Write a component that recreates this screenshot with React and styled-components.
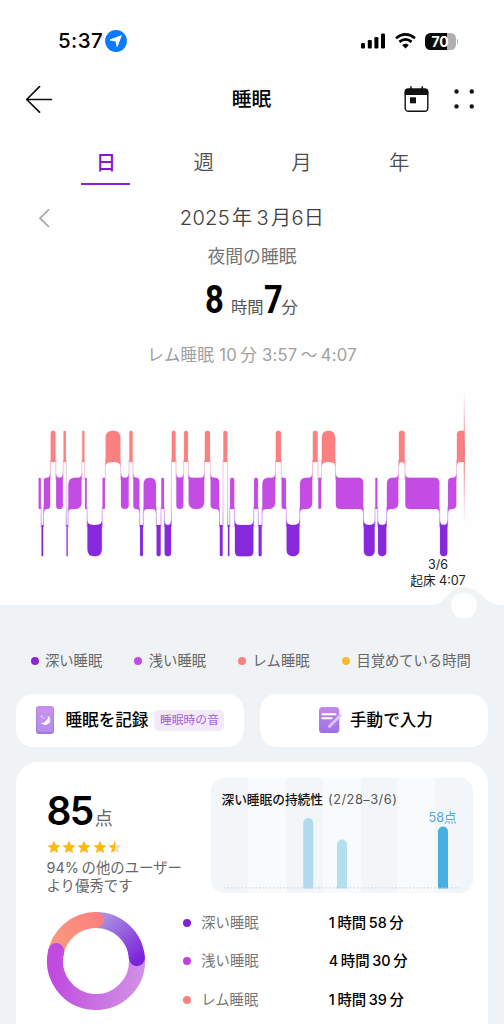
import React from "react";
import styled, { createGlobalStyle } from "styled-components";

const Global = createGlobalStyle`
  * { box-sizing: border-box; }
  body { margin: 0; background: #fefefe; overflow: hidden; }
`;

const font = `Inter, "Noto Sans CJK JP", sans-serif`;

const Screen = styled.div`
  width: 504px;
  height: 1024px;
  overflow: hidden;
  display: flex;
  flex-direction: column;
  background: #fefefe;
  font-family: ${font};
  color: #000;
  white-space: nowrap;
  & > * { flex: none; }
`;

/* Text whose drawn width is set by size and tracking */
const Text = styled.span`
  display: block;
  font-size: ${(p) => p.$size}px;
  line-height: ${(p) => p.$line || 20}px;
  font-weight: ${(p) => p.$weight || 400};
  color: ${(p) => p.$color || "#000"};
  letter-spacing: ${(p) => p.$track || 0}px;
`;

const StatusBar = styled.header`
  height: 82px;
  padding: 0 46px 0 58px;
  display: flex;
  align-items: center;
  justify-content: space-between;
`;
const Cluster = styled.div`
  display: flex;
  align-items: center;
  gap: ${(p) => p.$gap}px;
`;
const Battery = styled.div`
  width: 31px;
  height: 17px;
  border-radius: 5.5px;
  display: flex;
  align-items: center;
  justify-content: center;
  background: linear-gradient(90deg, #0a0a0a 0 70%, #b0b0b0 70%);
  color: #fff;
  font: 700 14px/17px Inter, sans-serif;
  letter-spacing: -0.3px;
`;
const BatteryTip = styled.div`
  width: 1.5px;
  height: 5px;
  border-radius: 0 2px 2px 0;
  background: #b5b5b5;
`;

const NavBar = styled.nav`
  height: 34px;
  padding: 0 28px 0 25px;
  display: grid;
  grid-template-columns: 74px 1fr 72px;
  align-items: center;
  text-align: center;
`;

const Tabs = styled.div`
  height: 69px;
  padding: 0 56px 0 57px;
  display: grid;
  grid-template-columns: repeat(4, 1fr);
  align-items: end;
  justify-items: center;
`;
const Tab = styled.div`
  width: 49px;
  height: 40px;
  text-align: center;
  font-size: 20.5px;
  line-height: 36px;
  color: ${(p) => (p.$active ? "#8319cf" : "#4d4d4d")};
  font-weight: ${(p) => (p.$active ? 500 : 350)};
  border-bottom: 2.5px solid ${(p) => (p.$active ? "#8a22d4" : "transparent")};
`;

const DateRow = styled.div`
  height: 66px;
  padding-left: 37px;
  padding-right: 37px;
  display: grid;
  grid-template-columns: 13px 1fr 13px;
  align-items: center;
  justify-items: center;
`;
const Center = styled.div`
  height: ${(p) => p.$h}px;
  display: flex;
  align-items: center;
  justify-content: center;
`;
const Duration = styled.div`
  height: 62px;
  display: flex;
  align-items: baseline;
  padding-left: 205px;
  padding-top: 15px;
`;
const BigDigit = styled.span`
  display: inline-block;
  width: ${(p) => p.$w}px;
  font: 700 39px/46px Roboto, sans-serif;
  transform: scaleX(0.84);
  transform-origin: 0 50%;
`;

const Chart = styled.svg`
  display: block;
  width: 504px;
  height: 172px;
`;
const WakeNote = styled.div`
  height: 48px;
  padding-left: 372px;
  width: 504px;
  display: flex;
  flex-direction: column;
  align-items: center;
`;

const Panel = styled.main`
  height: 419px;
  position: relative;
  background: #eff3f5;
  padding: 46px 16px 0 15.5px;
`;
const Bump = styled.svg`
  position: absolute;
  right: 0;
  top: -20px;
`;
const Legend = styled.div`
  height: 20px;
  padding-left: 15px;
  display: flex;
`;
const LegendItem = styled.div`
  width: 103.8px;
  flex: none;
  display: flex;
  align-items: center;
  gap: 6.5px;
`;
const Dot = styled.i`
  flex: none;
  width: 8px;
  height: 8px;
  border-radius: 50%;
  background: ${(p) => p.$color};
`;

const Actions = styled.div`
  margin-top: 23px;
  display: grid;
  grid-template-columns: 1fr 1fr;
  gap: 15.5px;
`;
const Action = styled.div`
  height: 52.5px;
  border-radius: 17px;
  background: #fff;
  display: flex;
  align-items: center;
  padding-left: ${(p) => p.$left}px;
`;
const ActionText = styled.span`
  margin-left: ${(p) => p.$gap}px;
  font-size: 16.6px;
  line-height: 24px;
  font-weight: 500;
`;
const Badge = styled.span`
  margin-left: 6px;
  width: 70px;
  height: 21px;
  border-radius: 5px;
  background: #f2eafb;
  display: flex;
  justify-content: center;
`;

const Card = styled.section`
  margin-top: 15.5px;
  height: 300px;
  border-radius: 22px;
  background: #fff;
  padding: 15.5px 15.5px 0 31px;
`;
const Summary = styled.div`
  display: grid;
  grid-template-columns: 164px 262px;
  height: 126px;
`;
const Score = styled.div`
  display: flex;
  align-items: baseline;
  gap: 2px;
  height: 60px;
  padding-top: 10px;
`;
const Stars = styled.div`
  display: flex;
  gap: 1.4px;
  height: 21px;
  padding-top: 2px;
`;
const Trend = styled.div`
  height: 115.5px;
  border-radius: 13px;
  overflow: hidden;
  background: repeating-linear-gradient(90deg, #f2f6f8 0 37.4px, #f9fafc 37.4px 74.8px);
  padding: 13px 0 0 11px;
`;
const TrendTitle = styled.div`
  display: flex;
  gap: 5px;
  height: 17px;
`;
const TrendPlot = styled.svg`
  display: block;
`;

const Breakdown = styled.div`
  display: grid;
  grid-template-columns: 136.5px 1fr;
`;
const Donut = styled.svg`
  margin-top: 7px;
  margin-left: -1px;
`;
const Row = styled.div`
  height: 38.5px;
  display: grid;
  grid-template-columns: 18.3px 127.5px 1fr;
  align-items: center;
`;
const Value = styled.div`
  font-size: 14.4px;
  line-height: 20px;
  font-weight: 500;
  display: flex;
  gap: 2.6px;
`;

const levelColors = ["#fb8080", "#c44be4", "#8728dc"];
const levelTop = [430.7, 477.8, 525];
const BAND = 31.2;

/* Consecutive sleep stages: [level, end x]; levels are 0 REM, 1 light, 2 deep */
const chartStart = 38.3;
const stages = [
  [1, 41.2], [2, 43.5], [1, 50.4], [0, 55.8], [1, 63.2], [0, 66.2], [2, 68], [1, 81.9],
  [0, 84.7], [1, 87.1], [2, 102.2], [1, 105.3], [0, 120.7], [1, 129], [0, 133], [1, 139.7],
  [2, 143.3], [1, 156.3], [2, 161], [1, 164.3], [2, 171.4], [0, 176], [1, 183.7], [0, 188.3],
  [1, 204.5], [0, 210.3], [1, 219.5], [2, 223], [0, 227.6], [2, 229.7], [1, 234.6], [2, 253.7],
  [1, 258.3], [2, 262], [1, 275.5], [0, 281.3], [1, 286.3], [2, 299.7], [1, 312.5], [0, 318],
  [1, 321.5], [0, 335.5], [1, 363.5], [2, 375], [1, 377.7], [2, 386.6], [1, 398.6], [0, 405],
  [1, 439.7], [2, 447.7], [1, 456.6], [0, 464.4],
];

const segments = stages.map(([level, x1], i) => {
  const x0 = i ? stages[i - 1][1] : chartStart;
  return { level, x0, x1, prev: i ? stages[i - 1][0] : null, next: i < stages.length - 1 ? stages[i + 1][0] : null };
});

/* Band outline: rounded away from a neighbour, flared toward it; thin bands stay plain */
function stagePath({ level, x0, x1, prev, next }) {
  const l = x0 + 0.35, r = x1 - 0.35, w = r - l;
  const t = levelTop[level], b = t + BAND;
  const rad = Math.min(w / 2, w < 16 ? 7 : 4.5);
  const plain = w < 5.6;
  const flare = plain ? 0 : 4;
  const fw = plain ? 0 : Math.min(w / 2, level === 1 ? 3.5 : rad);
  const up = (n) => n !== null && n < level;
  const down = (n) => n !== null && n > level;
  const flat = next === null;
  let d = up(prev)
    ? `M${l} ${t - flare}Q${l} ${t} ${l + fw} ${t}`
    : `M${l} ${t + rad}Q${l} ${t} ${l + rad} ${t}`;
  if (flat) d += `H${r}`;
  else d += up(next) ? `H${r - fw}Q${r} ${t} ${r} ${t - flare}` : `H${r - rad}Q${r} ${t} ${r} ${t + rad}`;
  if (flat) d += `V${b}`;
  else d += down(next) ? `V${b + flare}Q${r} ${b} ${r - fw} ${b}` : `V${b - rad}Q${r} ${b} ${r - rad} ${b}`;
  d += down(prev) ? `H${l + fw}Q${l} ${b} ${l} ${b + flare}Z` : `H${l + rad}Q${l} ${b} ${l} ${b - rad}Z`;
  return d;
}

function Hypnogram() {
  return (
    <Chart viewBox="0 385 504 172">
      <defs>
        <linearGradient id="joint" gradientUnits="userSpaceOnUse" x1="0" y1="455" x2="0" y2="535">
          <stop offset="0" stopColor="#fb9a9a" />
          <stop offset=".35" stopColor="#e0a0e8" />
          <stop offset=".65" stopColor="#d78bec" />
          <stop offset="1" stopColor="#8728dc" />
        </linearGradient>
        <linearGradient id="cursor" x1="0" y1="0" x2="0" y2="1">
          <stop offset="0" stopColor="#f17a8a" stopOpacity="0" />
          <stop offset=".45" stopColor="#ec7084" />
          <stop offset="1" stopColor="#f17a8a" stopOpacity="0" />
        </linearGradient>
      </defs>
      {segments.slice(1).map((s) => {
        const top = Math.min(s.level, s.prev), bottom = Math.max(s.level, s.prev);
        const y = levelTop[top] + BAND - 2;
        return <rect key={s.x0} x={s.x0 - 0.5} y={y} width="1" height={levelTop[bottom] + 2 - y} fill="url(#joint)" opacity=".6" />;
      })}
      {segments.map((s) => (
        <path key={s.x0} d={stagePath(s)} fill={levelColors[s.level]} stroke={levelColors[s.level]} strokeOpacity=".25" strokeWidth=".7" />
      ))}
      <rect x="463.7" y="391" width="1.2" height="134" fill="url(#cursor)" />
    </Chart>
  );
}

const polar = (deg) => {
  const a = ((deg - 90) * Math.PI) / 180;
  return [50 + 41 * Math.cos(a), 50 + 41 * Math.sin(a)];
};
const arc = (a, b) => {
  const [x0, y0] = polar(a), [x1, y1] = polar(b);
  return `M${x0} ${y0}A41 41 0 ${b - a > 180 ? 1 : 0} 1 ${x1} ${y1}`;
};

function StageDonut() {
  const [dx, dy] = polar(86);
  const [lx, ly] = polar(284);
  const [rx, ry] = polar(0);
  return (
    <Donut width="100" height="100" viewBox="0 0 100 100" fill="none" strokeWidth="16">
      <defs>
        <linearGradient id="dDeep" gradientUnits="userSpaceOnUse" x1="56" y1="8" x2="92" y2="50">
          <stop stopColor="#aa8fe2" /><stop offset="1" stopColor="#7c22da" />
        </linearGradient>
        <linearGradient id="dLight" gradientUnits="userSpaceOnUse" x1="95" y1="60" x2="10" y2="45">
          <stop stopColor="#d08fe6" /><stop offset="1" stopColor="#c04ade" />
        </linearGradient>
        <linearGradient id="dRem" gradientUnits="userSpaceOnUse" x1="12" y1="40" x2="55" y2="8">
          <stop stopColor="#f89a7c" /><stop offset="1" stopColor="#fc8080" />
        </linearGradient>
      </defs>
      <path d={arc(0, 86)} stroke="url(#dDeep)" />
      <path d={arc(278, 360)} stroke="url(#dRem)" />
      <circle cx={rx} cy={ry} r="8" fill="url(#dRem)" />
      <path d={arc(85, 284)} stroke="url(#dLight)" />
      <circle cx={lx} cy={ly} r="8" fill="url(#dLight)" />
      <circle cx={dx} cy={dy} r="8" fill="url(#dDeep)" />
    </Donut>
  );
}

const starPath = "M7 .6 8.95 4.9 13.6 5.4 10.1 8.5 11.1 13.1 7 10.7 2.9 13.1 3.9 8.5 .4 5.4 5.05 4.9Z";
function Star({ half }) {
  return (
    <svg width="14" height="14" viewBox="0 0 14 14">
      <defs>
        <linearGradient id="halfStar"><stop offset=".5" stopColor="#fcb813" /><stop offset=".5" stopColor="#dedede" /></linearGradient>
      </defs>
      <path d={starPath} fill={half ? "url(#halfStar)" : "#fcb813"} />
    </svg>
  );
}

const legend = [
  ["深い睡眠", "#8728dc"],
  ["浅い睡眠", "#c44be4"],
  ["レム睡眠", "#fb8080"],
  ["目覚めている時間", "#fcb928"],
];
const breakdown = [
  ["深い睡眠", "1時間58分", "#7d24d8"],
  ["浅い睡眠", "4時間30分", "#c040e0"],
  ["レム睡眠", "1時間39分", "#fb8080"],
];

export default function App() {
  return (
    <Screen>
      <Global />
      <StatusBar>
        <Cluster $gap={2}>
          <Text $size={20.5} $weight={500} $track={0.4}>5:37</Text>
          <svg width="22" height="22" viewBox="0 0 22 22">
            <circle cx="11" cy="11" r="10.9" fill="#0a7bfe" />
            <path d="M16.3 5.7 12.1 16.5 11.1 11.2 5 9.9Z" fill="#fff" stroke="#fff" strokeWidth=".9" strokeLinejoin="round" />
          </svg>
        </Cluster>
        <Cluster $gap={9}>
          <svg width="25" height="16" viewBox="0 0 25 16" fill="#000">
            <rect x="0" y="10" width="4" height="5.5" rx="1.2" />
            <rect x="6.8" y="7" width="4" height="8.5" rx="1.2" />
            <rect x="13.4" y="4" width="4" height="11.5" rx="1.2" />
            <rect x="20" y="0.6" width="4" height="14.9" rx="1.2" />
          </svg>
          <svg width="21" height="16" viewBox="0 0 21 16" fill="none" stroke="#000" strokeWidth="2.7">
            <path d="M1 5.2Q10.5-2.4 20 5.2" />
            <path d="M4.4 8.9Q10.5 4 16.6 8.9" />
            <path d="M10.5 15.5 7.2 12.2Q10.5 9.4 13.8 12.2Z" fill="#000" stroke="none" />
          </svg>
          <Cluster $gap={1}>
            <Battery>70</Battery>
            <BatteryTip />
          </Cluster>
        </Cluster>
      </StatusBar>

      <NavBar>
        <svg width="28" height="28" viewBox="0 0 28 28" fill="none" stroke="#111" strokeWidth="1.7" strokeLinecap="round" strokeLinejoin="round">
          <path d="M14.5 1.7 1.7 14.5 14.5 27.2M1.7 14.5H26.5" />
        </svg>
        <Text $size={19.7} $weight={500}>睡眠</Text>
        <Cluster $gap={24}>
          <svg width="25" height="28" viewBox="0 0 25 28" fill="none">
            <rect x="1.2" y="4.2" width="22.6" height="22.1" rx="3.3" stroke="#111" strokeWidth="1.4" />
            <path d="M.7 10V6.5A3 3 0 0 1 3.7 3.5H21.3A3 3 0 0 1 24.3 6.5V10Z" fill="#111" />
            <path d="M7 1.2V5M18.3 1.2V5" stroke="#111" strokeWidth="1.5" />
            <rect x="6" y="12.3" width="6" height="6" fill="#111" />
          </svg>
          <svg width="22" height="22" viewBox="0 0 22 22" fill="#111">
            <circle cx="3.5" cy="3.5" r="2.2" /><circle cx="18.8" cy="3.5" r="2.2" />
            <circle cx="3.5" cy="18.4" r="2.2" /><circle cx="18.8" cy="18.4" r="2.2" />
          </svg>
        </Cluster>
      </NavBar>

      <Tabs>
        <Tab $active>日</Tab>
        <Tab>週</Tab>
        <Tab>月</Tab>
        <Tab>年</Tab>
      </Tabs>

      <DateRow>
        <svg width="12" height="20" viewBox="0 0 12 20" fill="none" stroke="#a5a5a5" strokeWidth="1.7">
          <path d="M11 1.3 2 10.2 11 19" />
        </svg>
        <Text $size={20.1} $weight={350} $color="#404040" $track={0.3}>2025{"\u200a"}年{"\u2009"}3{"\u200a"}月6日</Text>
      </DateRow>
      <Center $h={11}><Text $size={17.8} $color="#757575">夜間の睡眠</Text></Center>
      <Duration>
        <BigDigit $w={26}>8</BigDigit>
        <Text $size={16.3} $color="#555">時間</Text>
        <BigDigit $w={18}>7</BigDigit>
        <Text $size={16.3} $color="#555">分</Text>
      </Duration>
      <Center $h={61}><Text $size={16.6} $color="#a0a0a0" $track={0.25}>レム睡眠 10{"\u2009"}分 3:57{"\u2009"}〜{"\u2009"}4:07</Text></Center>

      <Hypnogram />
      <WakeNote>
        <Text $size={12.5} $line={16} $color="#222">3/6</Text>
        <Text $size={12.6} $line={15} $color="#222">起床 4:07</Text>
      </WakeNote>

      <Panel>
        <Bump width="80" height="52" viewBox="424 585 80 52">
          <path d="M424 605.5H430C447 605.5 446 587.5 464 587.5S483 605.5 502 605.5H504V612H424Z" fill="#eff3f5" />
          <circle cx="464" cy="605.5" r="13" fill="#fefefe" />
        </Bump>
        <Legend>
          {legend.map(([label, color]) => (
            <LegendItem key={label}>
              <Dot $color={color} />
              <Text $size={14.3} $color="#666">{label}</Text>
            </LegendItem>
          ))}
        </Legend>
        <Actions>
          <Action $left={20.5}>
            <svg width="18" height="28" viewBox="0 0 18 28">
              <defs><linearGradient id="phone" x1="0" y1="0" x2="0" y2="1"><stop stopColor="#c88be8" /><stop offset="1" stopColor="#9a7ce2" /></linearGradient></defs>
              <rect width="18" height="28" rx="3" fill="url(#phone)" />
              <rect x="1.3" y="1.5" width="15.4" height="24.5" rx="1.8" fill="#c898ef" opacity=".6" />
              <path d="M11.6 9.4A5.1 5.1 0 1 1 4.6 16.3 4 4 0 0 0 10 14.6 4.6 4.6 0 0 0 11.6 9.4Z" fill="#fff" />
              <circle cx="5.8" cy="10.6" r="1.1" fill="#eddcfa" /><circle cx="8" cy="12.2" r=".7" fill="#eddcfa" />
            </svg>
            <ActionText $gap={11.5}>睡眠を記録</ActionText>
            <Badge><Text $size={11.8} $line={21} $color="#a45fdc">睡眠時の音</Text></Badge>
          </Action>
          <Action $left={59}>
            <svg width="23" height="28" viewBox="0 0 23 28">
              <defs><linearGradient id="note" x1="0" y1="0" x2="0" y2="1"><stop stopColor="#c28aea" /><stop offset="1" stopColor="#9d70e4" /></linearGradient></defs>
              <rect x="0" y="1" width="20.3" height="26" rx="3.6" fill="url(#note)" />
              <path d="M3.5 8.3H16.5M3.5 12.2H12.5" stroke="#fff" strokeWidth="2" strokeLinecap="round" />
              <path d="M10.5 20.5 21.3 9.5" stroke="#dcc5f7" strokeWidth="2.8" strokeLinecap="round" />
            </svg>
            <ActionText $gap={8.5}>手動で入力</ActionText>
          </Action>
        </Actions>

        <Card>
          <Summary>
            <div>
              <Score>
                <Text $size={39} $line={46} $weight={600} $track={-1.6}>85</Text>
                <Text $size={18} $color="#666">点</Text>
              </Score>
              <Stars>
                <Star /><Star /><Star /><Star /><Star half />
              </Stars>
              <Text $size={14.4} $line={18} $color="#666">94%{"\u2009"}の他のユーザー</Text>
              <Text $size={14.4} $line={18} $color="#666">より優秀です</Text>
            </div>
            <Trend>
              <TrendTitle>
                <Text $size={12.7} $line={17} $weight={500} $color="#111">深い睡眠の持続性</Text>
                <Text $size={12.8} $line={17} $color="#555" $track={0.5}>(2/28–3/6)</Text>
              </TrendTitle>
              <TrendPlot width="250" height="85" viewBox="222 807.5 250 85">
                <path d="M303.3 888V822.5a5 5 0 0 1 10 0V888Z" fill="#b1daf0" />
                <path d="M337 888V844a5 5 0 0 1 10 0V888Z" fill="#b3dff1" />
                <path d="M438 888V831a5 5 0 0 1 10 0V888Z" fill="#46b0e1" />
                <path d="M224 887.4H460" stroke="#c9cfd4" strokeWidth="1" strokeDasharray="1.5 2" />
                <text x="428.5" y="821.5" fontSize="12.6" fill="#52a8dc">58点</text>
              </TrendPlot>
            </Trend>
          </Summary>
          <Breakdown>
            <StageDonut />
            <div>
              {breakdown.map(([label, value, color]) => (
                <Row key={label}>
                  <Dot $color={color} />
                  <Text $size={14.3} $color="#777">{label}</Text>
                  <Value>{value.split(/(\d+)/).filter(Boolean).map((t, i) => <span key={i}>{t}</span>)}</Value>
                </Row>
              ))}
            </div>
          </Breakdown>
        </Card>
      </Panel>
    </Screen>
  );
}
